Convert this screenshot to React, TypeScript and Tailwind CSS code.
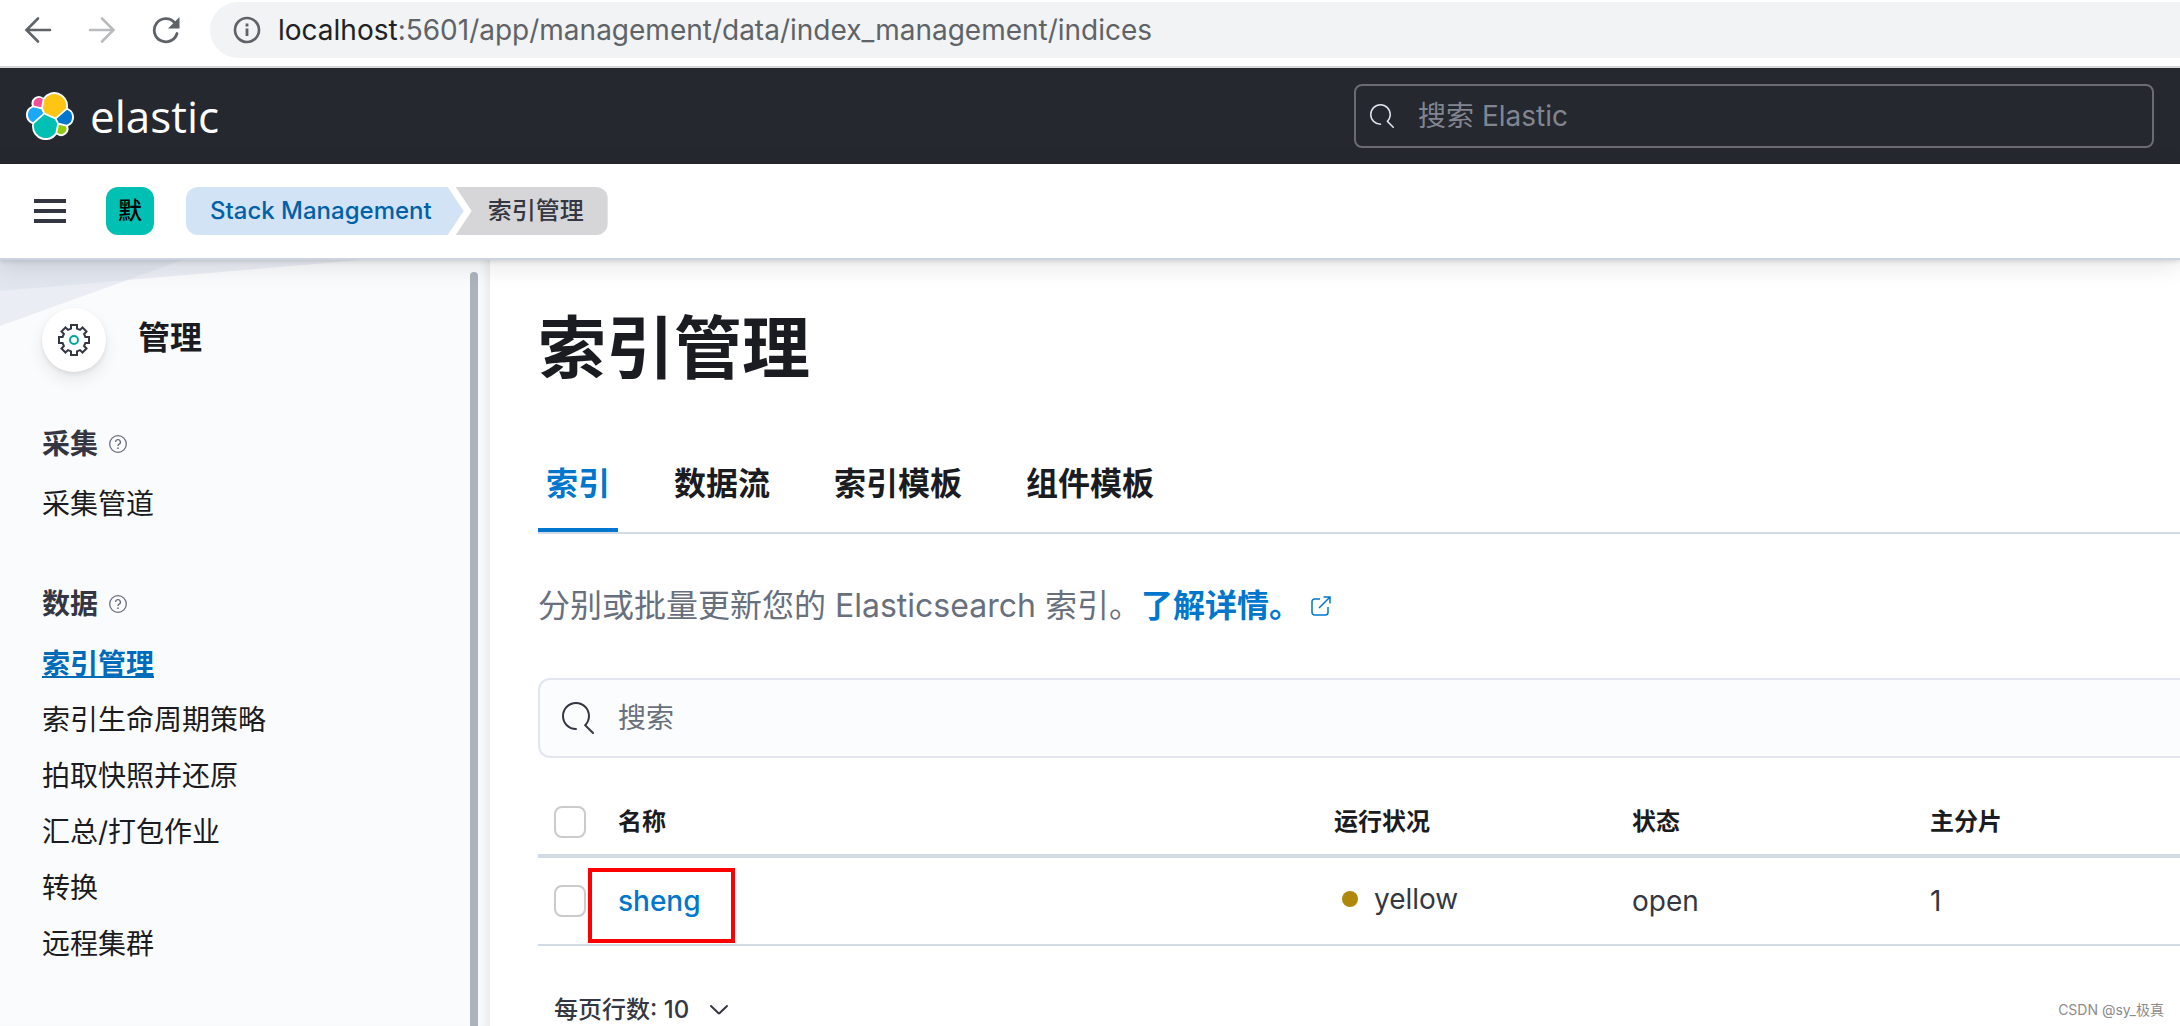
import React from "react";

type IconProps = { className?: string };

const SearchIcon = ({ className }: IconProps) => (
  <svg viewBox="0 0 16 16" className={className} fill="currentColor" aria-hidden="true">
    <path d="M11.271 11.978l3.872 3.873a.502.502 0 00.708 0 .502.502 0 000-.708l-3.565-3.564c2.38-2.747 2.267-6.923-.342-9.532-2.73-2.73-7.17-2.73-9.898 0-2.728 2.729-2.728 7.17 0 9.9a6.955 6.955 0 004.949 2.05.5.5 0 000-1 5.96 5.96 0 01-4.242-1.757 6.01 6.01 0 010-8.486 6.004 6.004 0 018.484 0 6.01 6.01 0 010 8.486.5.5 0 00.034.738z" />
  </svg>
);

const HelpIcon = () => (
  <svg viewBox="0 0 18 18" className="size-[18px] text-[#69707d]" fill="none" stroke="currentColor" aria-hidden="true">
    <circle cx="9" cy="9" r="8.3" strokeWidth="1.3" />
    <path d="M6.6 7.1a2.4 2.4 0 1 1 3.6 2c-.8.5-1.2.9-1.2 1.9" strokeWidth="1.4" />
    <circle cx="9" cy="13.2" r=".9" fill="currentColor" stroke="none" />
  </svg>
);

const GearIcon = () => (
  <svg viewBox="0 0 32 32" className="size-8" fill="none" strokeWidth="2" aria-hidden="true">
    <path
      stroke="#343741"
      d="M13 1h6v3.600l3 1.300 2.500-2.400 4 4-2.400 2.500 1.300 3H31v6h-3.600l-1.300 3 2.400 2.500-4 4-2.500-2.400-3 1.300V31h-6v-3.600l-3-1.300-2.500 2.400-4-4 2.400-2.500-1.300-3H1v-6h3.600l1.300-3L3.500 7.500l4-4L10 5.900l3-1.300z"
    />
    <circle cx="16" cy="16" r="4" stroke="#00a69b" />
  </svg>
);

const ElasticLogo = () => (
  <svg viewBox="0 0 32 32" className="size-12" aria-hidden="true">
    <path fill="#fff" d="M32 16.77c0-2.68-1.66-5.03-4.16-5.94a9.2 9.2 0 00.16-1.7A9.13 9.13 0 0011.49 3.8a4.85 4.85 0 00-7.5 5.53A6.36 6.36 0 000 15.3c0 2.7 1.67 5.05 4.18 5.96-.1.54-.16 1.1-.16 1.69a9.11 9.11 0 0016.5 5.32 4.82 4.82 0 007.5-5.5A6.36 6.36 0 0032 16.77" />
    <path fill="#FEC514" d="M12.58 13.79l7 3.2 7.07-6.2a7.85 7.85 0 00.15-1.55 7.9 7.9 0 00-14.4-4.46l-1.18 6.1 1.36 2.91z" />
    <path fill="#00BFB3" d="M5.33 21.21a7.98 7.98 0 00-.15 1.58 7.93 7.93 0 0014.48 4.45l1.16-6.07-1.55-2.97-7.03-3.2-6.91 6.21z" />
    <path fill="#F04E98" d="M5.29 9.09l4.8 1.13L11.14 4.77a3.79 3.79 0 00-5.85 4.32z" />
    <path fill="#1BA9F5" d="M4.87 10.23A5.33 5.33 0 001.3 15.24a5.3 5.3 0 003.4 4.94l6.73-6.08-1.24-2.64-5.32-1.24z" />
    <path fill="#93C90E" d="M20.87 27.24a3.78 3.78 0 005.85-4.32l-4.8-1.12-1.05 5.44z" />
    <path fill="#07C" d="M21.85 20.56l5.28 1.23a5.34 5.34 0 003.58-5.02 5.3 5.3 0 00-3.4-4.93l-6.91 6.05 1.45 2.67z" />
  </svg>
);

function BrowserBar() {
  return (
    <div className="flex h-[68px] shrink-0 items-start border-b-2 border-[#d5d7da] bg-white pt-[2px] text-[#5f6368]">
      <div className="flex h-14 w-[210px] shrink-0 items-center gap-9 pl-6">
        <button type="button" aria-label="后退">
          <svg viewBox="0 0 28 28" className="size-7" fill="none" stroke="currentColor" strokeWidth="2.600" strokeLinecap="round">
            <path d="M26 14H3M14 2.500 2.500 14 14 25.500" />
          </svg>
        </button>
        <button type="button" aria-label="前进" className="text-[#b9bbbe]">
          <svg viewBox="0 0 28 28" className="size-7" fill="none" stroke="currentColor" strokeWidth="2.600" strokeLinecap="round">
            <path d="M2 14h23M14 2.500 25.500 14 14 25.500" />
          </svg>
        </button>
        <button type="button" aria-label="重新加载">
          <svg viewBox="0 0 28 28" className="size-7" fill="none">
            <path d="M22.500 6.500A11.600 11.600 0 1 0 25 17.500" stroke="currentColor" strokeWidth="2.800" strokeLinecap="round" />
            <path d="M27.500 1v11.500H16z" fill="currentColor" />
          </svg>
        </button>
      </div>
      <label className="flex h-14 flex-1 items-center rounded-l-full bg-[#f1f3f4] pl-[23px]">
        <svg viewBox="0 0 28 28" className="size-7 shrink-0" fill="none" stroke="currentColor" aria-hidden="true">
          <circle cx="14" cy="14" r="12" strokeWidth="2.600" />
          <path d="M14 12.500V20M14 7.500v3" strokeWidth="2.800" />
        </svg>
        <span className="ml-[17px] text-[28px] leading-10 text-[#5f6368]" role="textbox" aria-label="地址">
          <span className="text-[#202124]">localhost</span>:5601/app/management/data/index_management/indices
        </span>
      </label>
    </div>
  );
}

function ElasticHeader() {
  return (
    <header className="flex h-24 shrink-0 items-center justify-between bg-[#25282f] px-[26px]">
      <a href="#home" className="flex items-center gap-4 text-white">
        <ElasticLogo />
        <span className="font-['Open_Sans'] text-[44px] leading-[48px]">elastic</span>
      </a>
      <label className="flex h-16 w-[800px] items-center gap-6 rounded-[8px] border-2 border-[#6a6c70] px-[14px]">
        <SearchIcon className="size-6 shrink-0 text-[#dfe5ef]" />
        <input
          type="search"
          aria-label="搜索 Elastic"
          placeholder="搜索 Elastic"
          className="h-full min-w-0 flex-1 bg-transparent text-[28px] text-white outline-none placeholder:text-[#81858f]"
        />
      </label>
    </header>
  );
}

function NavBar() {
  return (
    <div className="relative z-10 flex h-24 shrink-0 items-center border-b-2 border-[#ccd2e0] bg-white pl-[34px] shadow-[0_2px_4px_rgba(0,0,0,0.10),0_6px_24px_rgba(0,0,0,0.10)]">
      <button type="button" aria-label="切换主导航" className="flex w-8 flex-col gap-[6px]">
        <span className="h-1 bg-[#343741]" />
        <span className="h-1 bg-[#343741]" />
        <span className="h-1 bg-[#343741]" />
      </button>
      <button type="button" className="ml-10 size-12 rounded-xl bg-[#00bfb3] text-2xl font-medium text-black">
        默
      </button>
      <nav aria-label="面包屑" className="ml-8 flex h-12 text-2xl leading-[48px] font-medium">
        <a
          href="#stack"
          className="rounded-l-xl bg-[#d3e3f6] pr-8 pl-6 text-[#0061a6] [clip-path:polygon(0_0,calc(100%-16px)_0,100%_50%,calc(100%-16px)_100%,0_100%)]"
        >
          Stack Management
        </a>
        <span className="-ml-2 rounded-r-xl bg-[#d6d6d8] pr-6 pl-8 text-[#343741] [clip-path:polygon(0_0,100%_0,100%_100%,0_100%,16px_50%)]">
          索引管理
        </span>
      </nav>
    </div>
  );
}

const sections = [
  { title: "采集", items: ["采集管道"] },
  { title: "数据", items: ["索引管理", "索引生命周期策略", "拍取快照并还原", "汇总/打包作业", "转换", "远程集群"] },
];

function Sidebar() {
  return (
    <aside className="relative w-[490px] shrink-0 bg-[#fafbfd] shadow-[inset_-10px_0_10px_-6px_rgba(0,0,0,0.07)]">
      <svg viewBox="0 0 490 70" className="absolute top-0 left-0 h-[70px] w-full" aria-hidden="true">
        <path d="M0 0H360L0 31z" fill="#d3dae6" opacity=".4" />
        <path d="M0 0H182L125 21L0 66z" fill="#d3dae6" opacity=".4" />
      </svg>
      <div className="absolute top-3 right-3 bottom-0 w-2 rounded-t-full bg-[#adb3bd]" />
      <div className="relative px-[42px] pt-12">
        <div className="flex h-16 items-center gap-8">
          <span className="grid size-16 place-items-center rounded-full bg-white shadow-[0_2px_4px_rgba(0,0,0,0.08),0_8px_16px_rgba(0,0,0,0.08)]">
            <GearIcon />
          </span>
          <h2 className="pb-1 text-[32px] leading-[60px] font-bold text-[#1a1c21]">管理</h2>
        </div>
        {sections.map((s) => (
          <nav key={s.title} aria-label={s.title} className="pt-11">
            <h3 className="flex h-14 items-center gap-[11px] text-[28px] font-bold text-[#343741]">
              {s.title}
              <HelpIcon />
            </h3>
            <ul className="pt-1">
              {s.items.map((i) => (
                <li key={i} className="h-14 text-[28px] leading-[56px]">
                  {i === "索引管理" ? (
                    <a href="#indices" aria-current="page" className="font-bold text-[#006bb8] underline">
                      {i}
                    </a>
                  ) : (
                    <a href="#item" className="text-[#1a1c21]">
                      {i}
                    </a>
                  )}
                </li>
              ))}
            </ul>
          </nav>
        ))}
      </div>
    </aside>
  );
}

const tabs = ["索引", "数据流", "索引模板", "组件模板"];

const Check = ({ label }: { label: string }) => (
  <input
    type="checkbox"
    aria-label={label}
    className="block size-8 appearance-none rounded-lg border-2 border-[#c9cbcd] bg-white checked:bg-[#07c]"
  />
);

function Main() {
  return (
    <main className="min-w-0 flex-1 overflow-hidden bg-white pl-12">
      <h1 className="pt-12 text-[68px] leading-[80px] font-bold text-[#1a1c21]">索引管理</h1>
      <div role="tablist" className="mt-12 flex h-[98px] gap-12 border-b-2 border-[#d3dae6]">
        {tabs.map((t, i) => (
          <button
            key={t}
            type="button"
            role="tab"
            aria-selected={i === 0}
            className={
              i === 0
                ? "border-b-4 border-[#07c] px-2 pt-1 text-[32px] font-bold text-[#07c]"
                : "border-b-4 border-transparent px-2 pt-1 text-[32px] font-bold text-[#1a1c21]"
            }
          >
            {t}
          </button>
        ))}
      </div>
      <p className="mt-12 flex h-12 items-center text-[32px] leading-[48px] whitespace-pre text-[#69707d]">
        分别或批量更新您的 Elasticsearch 索引。
        <a href="#docs" className="flex items-center gap-[10px] font-bold text-[#07c]">
          了解详情。
          <svg viewBox="0 0 20 20" className="size-5" fill="none" stroke="currentColor" strokeWidth="1.500" aria-hidden="true">
            <path d="M9 3H3.500A2.500 2.500 0 0 0 1 5.500v11A2.500 2.500 0 0 0 3.500 19h11a2.500 2.500 0 0 0 2.500-2.500V11M12.500 1H19v6.500M19 1 8 12" />
          </svg>
        </a>
      </p>
      <label className="mt-12 flex h-20 items-center gap-6 rounded-l-xl border-2 border-r-0 border-[#e3e5f1] bg-[#fbfcfd] pl-[22px]">
        <SearchIcon className="size-8 text-[#343741]" />
        <input
          type="search"
          aria-label="搜索"
          placeholder="搜索"
          className="h-full min-w-0 flex-1 bg-transparent text-[28px] outline-none placeholder:text-[#69707d]"
        />
      </label>
      <table className="mt-8 w-full table-fixed text-left text-[28px] text-[#343741]">
        <colgroup>
          <col className="w-16" />
          <col />
          <col className="w-[298px]" />
          <col className="w-[298px]" />
          <col className="w-[266px]" />
        </colgroup>
        <thead>
          <tr className="h-[66px] border-b-4 border-[#d3dae6] text-2xl text-[#1a1c21]">
            <th className="pl-4">
              <Check label="选择所有行" />
            </th>
            <th className="pl-4 font-bold">名称</th>
            <th className="pl-4 font-bold">运行状况</th>
            <th className="pl-4 font-bold">状态</th>
            <th className="pl-4 font-bold">主分片</th>
          </tr>
        </thead>
        <tbody>
          <tr className="h-[89px] border-b-2 border-[#d3dae6]">
            <td className="pl-4">
              <Check label="选择 sheng" />
            </td>
            <td className="relative pl-4 font-medium">
              <a href="#sheng" className="text-[#07c]">
                sheng
              </a>
              <span className="pointer-events-none absolute top-[10px] -left-[14px] h-[75px] w-[147px] border-4 border-[#f00]" />
            </td>
            <td className="pl-6">
              <span className="flex items-center gap-4 pb-1">
                <span className="size-4 rounded-full bg-[#b0870d]" />
                yellow
              </span>
            </td>
            <td className="pl-4">open</td>
            <td className="pl-4">1</td>
          </tr>
        </tbody>
      </table>
      <div className="flex items-end justify-between pt-11 pr-4 pl-4">
        <button type="button" className="flex h-10 items-center gap-5 text-2xl font-medium text-[#343741]">
          每页行数: 10
          <svg viewBox="0 0 20 12" className="w-5" fill="none" stroke="currentColor" strokeWidth="2" strokeLinecap="round" aria-hidden="true">
            <path d="M2 2l7.300 7a1 1 0 0 0 1.400 0L18 2" />
          </svg>
        </button>
        <span className="text-[14px] leading-10 text-[#8c8c8c]">CSDN @sy_极真</span>
      </div>
    </main>
  );
}

export default function App() {
  return (
    <div className="flex h-screen flex-col overflow-hidden bg-white font-['Inter','Noto_Sans_CJK_SC',sans-serif]">
      <BrowserBar />
      <ElasticHeader />
      <NavBar />
      <div className="flex min-h-0 flex-1">
        <Sidebar />
        <Main />
      </div>
    </div>
  );
}
